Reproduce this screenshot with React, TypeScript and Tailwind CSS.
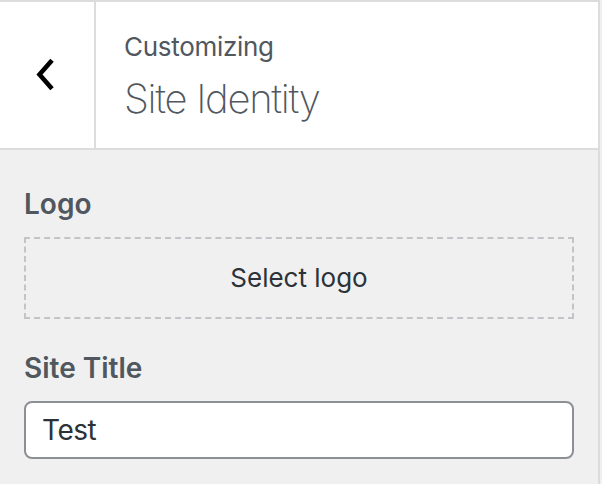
import React from "react";

export default function App() {
  return (
    <div className="w-[602px] h-[484px] bg-[#f0f0f1] overflow-hidden" style={{ fontFamily: "Inter, 'Noto Sans', sans-serif" }}>
      <div className="w-[600px] h-[484px] border-r-2 border-[#dcdcde] flex flex-col">
        <div className="h-[150px] bg-white border-t-2 border-b-2 border-[#dcdcde] flex">
          <div className="w-[96px] border-r-2 border-[#dcdcde] flex items-center justify-center">
            <svg width="30" height="36" viewBox="0 0 30 36" className="ml-[-4px] mt-[0px]">
              <polyline points="20.5,5 9.5,17.5 20.5,30" fill="none" stroke="#000" strokeWidth="4.6" strokeLinecap="square" strokeLinejoin="miter" />
            </svg>
          </div>
          <div className="pl-[28px] pt-[29px] flex flex-col">
            <div className="text-[26px] leading-[32px] text-[#50575e] font-normal tracking-[-0.3px]">Customizing</div>
            <div className="mt-[12px] text-[40px] leading-[48px] text-[#50575e] font-extralight tracking-[-1.3px]">Site Identity</div>
          </div>
        </div>
        <div className="px-[24px] pt-[36px] flex flex-col">
          <div className="text-[28px] leading-[36px] font-semibold text-[#50575e]">Logo</div>
          <div className="mt-[15px] h-[82px] border-2 border-dashed border-[#c3c4c7] flex items-center justify-center">
            <span className="text-[26px] leading-[32px] text-[#2c3338]">Select logo</span>
          </div>
          <div className="mt-[31px] text-[28px] leading-[36px] font-semibold text-[#50575e]">Site Title</div>
          <div className="mt-[15px] h-[58px] bg-white border-2 border-[#8c8f94] rounded-[8px] flex items-center pl-[16px]">
            <span className="text-[28px] leading-[36px] text-[#2c3338] tracking-[-0.5px]">Test</span>
          </div>
        </div>
      </div>
    </div>
  );
}
